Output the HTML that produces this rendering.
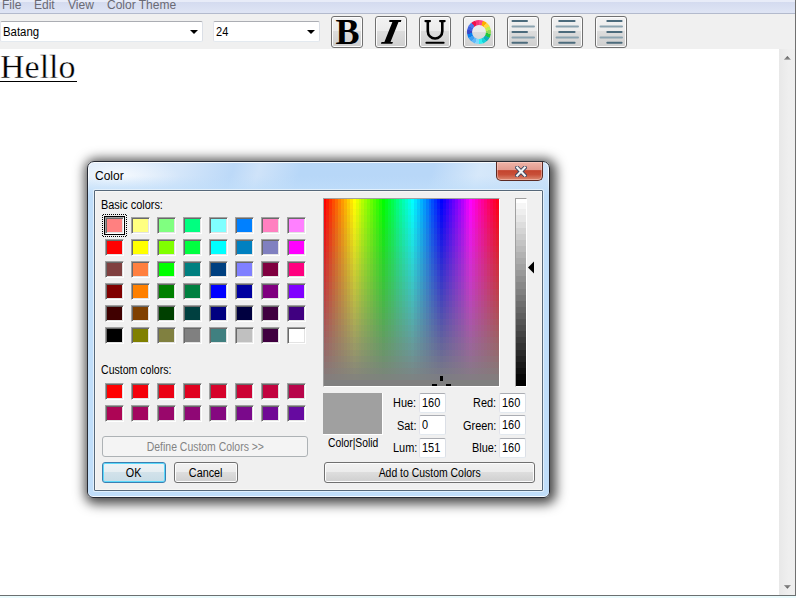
<!DOCTYPE html>
<html><head><meta charset="utf-8">
<style>
*{margin:0;padding:0;box-sizing:border-box}
html,body{width:796px;height:598px;overflow:hidden;background:#f0f0f0;font-family:"Liberation Sans",sans-serif;position:relative}
.a{position:absolute}
#menubar{left:0;top:0;width:796px;height:14px;background:linear-gradient(#e8ecf8 0,#e8ecf8 2px,#d4dbef 2px,#dee4f4 12px);border-bottom:1px solid #b3bacd}
.mi{position:absolute;top:-2px;font-size:12px;color:#6a6a74;line-height:14px}
.combo{position:absolute;top:21px;height:21px;background:#fff;border:1px solid #abadb3;border-left-color:#e2e3ea;border-right-color:#dbdfe6;border-bottom-color:#e3e9ef;border-radius:2px}
.combo span{position:absolute;left:2px;top:3px;font-size:12px;color:#000;line-height:14px}
.combo i{position:absolute;top:8px;width:0;height:0;border-left:4px solid transparent;border-right:4px solid transparent;border-top:4px solid #000}
.tb{position:absolute;top:16px;width:32px;height:32px;border:1px solid #707070;border-radius:3px;background:linear-gradient(#f2f2f2 0,#ebebeb 14px,#dddddd 14px,#cfcfcf 30px);box-shadow:inset 0 0 0 1px #fcfcfc}
#doc{left:0;top:49px;width:779px;height:546px;background:#fff}
#vs{left:779px;top:49px;width:16px;height:546px;background:linear-gradient(90deg,#e8e8e8,#efefef 60%,#eeeeee)}
#rline{left:795px;top:0;width:1px;height:596px;background:#707070}
#bline{left:0;top:595px;width:796px;height:1px;background:#6b7070}
#bbot{left:0;top:596px;width:796px;height:2px;background:#eafbfd}

.sw{position:absolute;width:19px;height:17px;border:1px solid;border-color:#a0a0a0 #fff #fff #a0a0a0;box-shadow:inset 1px 1px 0 #696969,inset -1px -1px 0 #e3e3e3}
.t11{position:absolute;font-size:12px;line-height:14px;color:#000;white-space:nowrap;transform:scaleX(.91);transform-origin:0 0}
.ed{position:absolute;width:27px;height:20px;background:#fff;border:1px solid;border-color:#abadb3 #dbdfe6 #e3e9ef #e2e3ea;border-radius:2px}
.ed span{position:absolute;left:2px;top:2px;font-size:12px;line-height:14px;transform:scaleX(.91);transform-origin:0 0}
.btn{position:absolute;height:21px;border:1px solid #707070;border-radius:3px;background:linear-gradient(#f2f2f2 0,#ebebeb 50%,#dddddd 50%,#cfcfcf 100%);box-shadow:inset 0 0 0 1px #fcfcfc;font-size:12px;line-height:13px;text-align:center;color:#000;white-space:nowrap}
.btn b{font-weight:normal;display:inline-block;transform:scaleX(.9)}
</style></head><body>
<div id="menubar" class="a">
  <span class="mi" style="left:2px">File</span>
  <span class="mi" style="left:34px">Edit</span>
  <span class="mi" style="left:68px">View</span>
  <span class="mi" style="left:107px">Color Theme</span>
</div>
<div class="combo" style="left:0;width:203px"><span style="transform:scaleX(.95);transform-origin:0 0">Batang</span><i style="left:189px"></i></div>
<div class="combo" style="left:213px;width:107px"><span style="left:2px;transform:scaleX(.92);transform-origin:0 0">24</span><i style="left:93px"></i></div>


<div class="tb" style="left:331px"><span style="position:absolute;left:3.5px;top:-3px;font-family:'Liberation Serif',serif;font-weight:bold;font-size:36px;line-height:36px;color:#000">B</span></div>
<div class="tb" style="left:375px"><svg class="a" style="left:-1px;top:-1px" width="32" height="32" viewBox="0 0 32 32"><path d="M14.4 4H26.4L25.8 5.9H23.5L15.5 26H17.9L17.3 27.8H5.9L6.5 26H9.4L17.4 5.9H14.2Z" fill="#000"/></svg></div>
<div class="tb" style="left:419px"><svg class="a" style="left:-1px;top:-1px" width="32" height="32" viewBox="0 0 32 32"><path d="M6.4 5.1H11M21.05 5.1H25.7" fill="none" stroke="#000" stroke-width="2.1" stroke-linecap="round"/><path d="M8.8 5.1V15.25A7.25 7.25 0 0 0 23.3 15.25V5.1" fill="none" stroke="#000" stroke-width="2.6"/><path d="M7.4 26.75H24.6" stroke="#000" stroke-width="2.1" stroke-linecap="round"/></svg></div>
<div class="tb" style="left:463px"><div class="a" style="left:3px;top:3px;width:24px;height:24px;border-radius:50%;background:conic-gradient(#ff4888 0deg 20deg,#ffaa00 20deg 40deg,#ffd840 40deg 60deg,#c0f050 60deg 80deg,#90d858 80deg 100deg,#20c840 100deg 120deg,#10b0b8 120deg 140deg,#18d0d8 140deg 160deg,#30f0f0 160deg 180deg,#80d8ff 180deg 200deg,#60b8f8 200deg 220deg,#40a0f0 220deg 240deg,#0880f0 240deg 260deg,#3848c8 260deg 280deg,#4060e0 280deg 300deg,#5078e8 300deg 320deg,#f0104a 320deg 340deg,#f83478 340deg 360deg)"></div><div class="a" style="left:8px;top:8px;width:14px;height:14px;border-radius:50%;background:linear-gradient(#ececec 0,#ebebeb 7px,#dddddd 7px,#d8d8d8)"></div></div>
<div class="tb" style="left:507px"><svg class="a" style="left:-1px;top:-1px" width="32" height="32" viewBox="0 0 32 32"><g stroke-linecap="round" stroke-width="2"><path d="M5.5 5.1H20M5.5 16H20M5.5 26.8H20" stroke="#4c6b7c"/><path d="M5.5 10.5H27M5.5 21.4H27" stroke="#8ba3b0"/></g></svg></div>
<div class="tb" style="left:551px"><svg class="a" style="left:-1px;top:-1px" width="32" height="32" viewBox="0 0 32 32"><g stroke-linecap="round" stroke-width="2"><path d="M8.2 5.1H23.6M8.2 16H23.6M8.2 26.8H23.6" stroke="#4c6b7c"/><path d="M5.5 10.5H27M5.5 21.4H27" stroke="#8ba3b0"/></g></svg></div>
<div class="tb" style="left:595px"><svg class="a" style="left:-1px;top:-1px" width="32" height="32" viewBox="0 0 32 32"><g stroke-linecap="round" stroke-width="2"><path d="M12.3 5.1H26.6M12.3 16H26.6M12.3 26.8H26.6" stroke="#4c6b7c"/><path d="M5.5 10.5H27M5.5 21.4H27" stroke="#8ba3b0"/></g></svg></div>

<div id="doc" class="a"></div>
<div id="vs" class="a"></div>
<svg class="a" style="left:779px;top:49px" width="16" height="546"><defs><linearGradient id="ag" x1="0" y1="0" x2="0" y2="1"><stop offset="0" stop-color="#505050"/><stop offset="1" stop-color="#9a9a9a"/></linearGradient><linearGradient id="ag2" x1="0" y1="0" x2="0" y2="1"><stop offset="0" stop-color="#9a9a9a"/><stop offset="1" stop-color="#505050"/></linearGradient></defs><path d="M4.8 10.8H12L8.4 7Z" fill="url(#ag)"/><path d="M4.8 536H12L8.4 539.8Z" fill="url(#ag2)"/></svg>
<div class="a" style="left:0;top:48px;font-family:'Liberation Serif',serif;font-size:34px;line-height:38px;color:#000;-webkit-text-stroke:0.35px #fff">Hello</div>
<div class="a" style="left:0;top:81px;width:77px;height:1px;background:#000"></div>

<!-- dialog -->
<div class="a" style="left:87px;top:161px;width:463px;height:337px;border-radius:7px 7px 6px 6px;box-shadow:2px 2px 12px 4px rgba(0,0,0,.72)"></div>
<div class="a" style="left:87px;top:161px;width:463px;height:337px;border-radius:7px 7px 6px 6px;border:1px solid #262a33;background:radial-gradient(ellipse 60px 22px at 32px 14px,rgba(255,255,255,.75),rgba(255,255,255,0)),linear-gradient(108deg,#dcebfb 0,#d4e6fa 90px,#bcd9f8 140px,#cfe3f9 165px,#b7d7f8 205px,#b8d7f8 330px,#d6e8fa 375px,#cde2f9 420px,#cfe3f9 463px);box-shadow:inset 0 0 0 1px rgba(255,255,255,.8)"></div>
<div class="a" style="left:88px;top:176px;width:461px;height:320px;border-radius:0 0 5px 5px;background:linear-gradient(rgba(192,222,250,0),#c0defa 20px)"></div>
<span class="a" style="left:95px;top:169px;font-size:12px;line-height:14px;color:#000">Color</span>
<div class="a" style="left:496px;top:162px;width:47px;height:19px;border:1px solid #5c2a23;border-top:none;border-radius:0 0 5px 5px;background:linear-gradient(#efb4a8 0,#e39c90 42%,#c4442e 48%,#c84f38 70%,#dc8a72 100%);box-shadow:inset 0 0 0 1px rgba(255,220,210,.45)"><svg class="a" style="left:18px;top:4px" width="12" height="11" viewBox="0 0 12 11"><path d="M2.2 1.6L9.8 9.4M9.8 1.6L2.2 9.4" stroke="#3b4660" stroke-width="4" stroke-linecap="square"/><path d="M2.2 1.6L9.8 9.4M9.8 1.6L2.2 9.4" stroke="#f4f4f4" stroke-width="2.2" stroke-linecap="square"/></svg></div>
<div class="a" style="left:94px;top:190px;width:449px;height:301px;border:1px solid #56687a;border-radius:1px;background:#f0f0f0;box-shadow:0 0 0 1px #e2f0fc,inset 1px 1px 0 #f8f8f6,inset -1px -1px 0 #f6f6f4"></div>
<span class="t11" style="left:101px;top:198px">Basic colors:</span>
<span class="t11" style="left:101px;top:363px;transform:scaleX(.88)">Custom colors:</span>
<div class="sw" style="left:105px;top:217px;background:#FF8080"></div>
<div class="sw" style="left:131px;top:217px;background:#FFFF80"></div>
<div class="sw" style="left:157px;top:217px;background:#80FF80"></div>
<div class="sw" style="left:183px;top:217px;background:#00FF80"></div>
<div class="sw" style="left:209px;top:217px;background:#80FFFF"></div>
<div class="sw" style="left:235px;top:217px;background:#0080FF"></div>
<div class="sw" style="left:261px;top:217px;background:#FF80C0"></div>
<div class="sw" style="left:287px;top:217px;background:#FF80FF"></div>
<div class="sw" style="left:105px;top:239px;background:#FF0000"></div>
<div class="sw" style="left:131px;top:239px;background:#FFFF00"></div>
<div class="sw" style="left:157px;top:239px;background:#80FF00"></div>
<div class="sw" style="left:183px;top:239px;background:#00FF40"></div>
<div class="sw" style="left:209px;top:239px;background:#00FFFF"></div>
<div class="sw" style="left:235px;top:239px;background:#0080C0"></div>
<div class="sw" style="left:261px;top:239px;background:#8080C0"></div>
<div class="sw" style="left:287px;top:239px;background:#FF00FF"></div>
<div class="sw" style="left:105px;top:261px;background:#804040"></div>
<div class="sw" style="left:131px;top:261px;background:#FF8040"></div>
<div class="sw" style="left:157px;top:261px;background:#00FF00"></div>
<div class="sw" style="left:183px;top:261px;background:#008080"></div>
<div class="sw" style="left:209px;top:261px;background:#004080"></div>
<div class="sw" style="left:235px;top:261px;background:#8080FF"></div>
<div class="sw" style="left:261px;top:261px;background:#800040"></div>
<div class="sw" style="left:287px;top:261px;background:#FF0080"></div>
<div class="sw" style="left:105px;top:283px;background:#800000"></div>
<div class="sw" style="left:131px;top:283px;background:#FF8000"></div>
<div class="sw" style="left:157px;top:283px;background:#008000"></div>
<div class="sw" style="left:183px;top:283px;background:#008040"></div>
<div class="sw" style="left:209px;top:283px;background:#0000FF"></div>
<div class="sw" style="left:235px;top:283px;background:#0000A0"></div>
<div class="sw" style="left:261px;top:283px;background:#800080"></div>
<div class="sw" style="left:287px;top:283px;background:#8000FF"></div>
<div class="sw" style="left:105px;top:305px;background:#400000"></div>
<div class="sw" style="left:131px;top:305px;background:#804000"></div>
<div class="sw" style="left:157px;top:305px;background:#004000"></div>
<div class="sw" style="left:183px;top:305px;background:#004040"></div>
<div class="sw" style="left:209px;top:305px;background:#000080"></div>
<div class="sw" style="left:235px;top:305px;background:#000040"></div>
<div class="sw" style="left:261px;top:305px;background:#400040"></div>
<div class="sw" style="left:287px;top:305px;background:#400080"></div>
<div class="sw" style="left:105px;top:327px;background:#000000"></div>
<div class="sw" style="left:131px;top:327px;background:#808000"></div>
<div class="sw" style="left:157px;top:327px;background:#808040"></div>
<div class="sw" style="left:183px;top:327px;background:#808080"></div>
<div class="sw" style="left:209px;top:327px;background:#408080"></div>
<div class="sw" style="left:235px;top:327px;background:#C0C0C0"></div>
<div class="sw" style="left:261px;top:327px;background:#400040"></div>
<div class="sw" style="left:287px;top:327px;background:#FFFFFF"></div>
<div class="sw" style="left:105px;top:383px;background:#ff0000"></div>
<div class="sw" style="left:131px;top:383px;background:#f5010b"></div>
<div class="sw" style="left:157px;top:383px;background:#eb0115"></div>
<div class="sw" style="left:183px;top:383px;background:#e00220"></div>
<div class="sw" style="left:209px;top:383px;background:#d6032b"></div>
<div class="sw" style="left:235px;top:383px;background:#cc0335"></div>
<div class="sw" style="left:261px;top:383px;background:#c20440"></div>
<div class="sw" style="left:287px;top:383px;background:#b8054b"></div>
<div class="sw" style="left:105px;top:405px;background:#ad0555"></div>
<div class="sw" style="left:131px;top:405px;background:#a30660"></div>
<div class="sw" style="left:157px;top:405px;background:#99076b"></div>
<div class="sw" style="left:183px;top:405px;background:#8f0775"></div>
<div class="sw" style="left:209px;top:405px;background:#850880"></div>
<div class="sw" style="left:235px;top:405px;background:#7a098b"></div>
<div class="sw" style="left:261px;top:405px;background:#700995"></div>
<div class="sw" style="left:287px;top:405px;background:#660aa0"></div>

<div class="a" style="left:104px;top:216px;width:21px;height:19px;border:1px solid #000"></div>
<svg class="a" style="left:102px;top:214px" width="25" height="23"><defs><pattern id="dp" width="2" height="2" patternUnits="userSpaceOnUse"><rect x="1" y="0" width="1" height="1" fill="#000"/><rect x="0" y="1" width="1" height="1" fill="#000"/></pattern></defs><path d="M0 0h25v1H0zM0 22h25v1H0zM0 0h1v23H0zM24 0h1v23h-1z" fill="url(#dp)"/></svg>
<!-- spectrum -->
<div class="a" style="left:323px;top:198px;width:177px;height:189px;border:1px solid;border-color:#a0a0a0 #fff #fff #a0a0a0;background:linear-gradient(rgba(128,128,128,0.000) 0.0px 4.2px,rgba(128,128,128,0.033) 4.2px 10.3px,rgba(128,128,128,0.067) 10.3px 16.4px,rgba(128,128,128,0.100) 16.4px 22.5px,rgba(128,128,128,0.133) 22.5px 28.6px,rgba(128,128,128,0.167) 28.6px 34.7px,rgba(128,128,128,0.200) 34.7px 40.8px,rgba(128,128,128,0.233) 40.8px 46.9px,rgba(128,128,128,0.267) 46.9px 53.0px,rgba(128,128,128,0.300) 53.0px 59.1px,rgba(128,128,128,0.333) 59.1px 65.2px,rgba(128,128,128,0.367) 65.2px 71.3px,rgba(128,128,128,0.400) 71.3px 77.4px,rgba(128,128,128,0.433) 77.4px 83.5px,rgba(128,128,128,0.467) 83.5px 89.6px,rgba(128,128,128,0.500) 89.6px 95.7px,rgba(128,128,128,0.533) 95.7px 101.8px,rgba(128,128,128,0.567) 101.8px 107.9px,rgba(128,128,128,0.600) 107.9px 114.0px,rgba(128,128,128,0.633) 114.0px 120.1px,rgba(128,128,128,0.667) 120.1px 126.2px,rgba(128,128,128,0.700) 126.2px 132.3px,rgba(128,128,128,0.733) 132.3px 138.4px,rgba(128,128,128,0.767) 138.4px 144.5px,rgba(128,128,128,0.800) 144.5px 150.6px,rgba(128,128,128,0.833) 150.6px 156.7px,rgba(128,128,128,0.867) 156.7px 162.8px,rgba(128,128,128,0.900) 162.8px 168.9px,rgba(128,128,128,0.933) 168.9px 175.0px,rgba(128,128,128,0.967) 175.0px 181.1px,rgba(128,128,128,1.000) 181.1px 187.0px),linear-gradient(90deg,#ff0000 0px 2px,#ff1a00 2px 5px,#ff3300 5px 8px,#ff4d00 8px 11px,#ff6600 11px 14px,#ff8000 14px 17px,#ff9900 17px 20px,#ffb200 20px 23px,#ffcc00 23px 26px,#ffe500 26px 29px,#ffff00 29px 32px,#e6ff00 32px 35px,#ccff00 35px 37px,#b2ff00 37px 40px,#99ff00 40px 43px,#80ff00 43px 46px,#66ff00 46px 49px,#4cff00 49px 52px,#33ff00 52px 55px,#1aff00 55px 58px,#00ff00 58px 61px,#00ff19 61px 64px,#00ff33 64px 67px,#00ff4d 67px 70px,#00ff66 70px 72px,#00ff80 72px 75px,#00ff99 75px 78px,#00ffb3 78px 81px,#00ffcc 81px 84px,#00ffe6 84px 87px,#00ffff 87px 90px,#00e5ff 90px 93px,#00ccff 93px 96px,#00b2ff 96px 99px,#0099ff 99px 102px,#007fff 102px 105px,#0066ff 105px 107px,#004cff 107px 110px,#0033ff 110px 113px,#0019ff 113px 116px,#0000ff 116px 119px,#1900ff 119px 122px,#3300ff 122px 125px,#4d00ff 125px 128px,#6600ff 128px 131px,#7f00ff 131px 134px,#9900ff 134px 137px,#b300ff 137px 140px,#cc00ff 140px 142px,#e500ff 142px 145px,#ff00ff 145px 148px,#ff00e6 148px 151px,#ff00cc 151px 154px,#ff00b2 154px 157px,#ff0099 157px 160px,#ff0080 160px 163px,#ff0066 163px 166px,#ff004c 166px 169px,#ff0033 169px 172px,#ff001a 172px 175px)"></div>
<div class="a" style="left:515px;top:198px;width:12px;height:189px;border:1px solid;border-color:#a0a0a0 #fff #fff #a0a0a0;background:linear-gradient(rgb(255,255,255) 0.0px 4.2px,rgb(246,246,246) 4.2px 10.3px,rgb(238,238,238) 10.3px 16.4px,rgb(230,230,230) 16.4px 22.5px,rgb(221,221,221) 22.5px 28.6px,rgb(212,212,212) 28.6px 34.7px,rgb(204,204,204) 34.7px 40.8px,rgb(195,195,195) 40.8px 46.9px,rgb(187,187,187) 46.9px 53.0px,rgb(178,178,178) 53.0px 59.1px,rgb(170,170,170) 59.1px 65.2px,rgb(162,162,162) 65.2px 71.3px,rgb(153,153,153) 71.3px 77.4px,rgb(144,144,144) 77.4px 83.5px,rgb(136,136,136) 83.5px 89.6px,rgb(128,128,128) 89.6px 95.7px,rgb(119,119,119) 95.7px 101.8px,rgb(110,110,110) 101.8px 107.9px,rgb(102,102,102) 107.9px 114.0px,rgb(94,94,94) 114.0px 120.1px,rgb(85,85,85) 120.1px 126.2px,rgb(77,77,77) 126.2px 132.3px,rgb(68,68,68) 132.3px 138.4px,rgb(59,59,59) 138.4px 144.5px,rgb(51,51,51) 144.5px 150.6px,rgb(42,42,42) 150.6px 156.7px,rgb(34,34,34) 156.7px 162.8px,rgb(25,25,25) 162.8px 168.9px,rgb(17,17,17) 168.9px 175.0px,rgb(8,8,8) 175.0px 181.1px,rgb(0,0,0) 181.1px 187.0px)"></div>
<svg class="a" style="left:527px;top:260px" width="8" height="15" viewBox="0 0 8 15"><path d="M1 7.5L7 1.5V13.5Z" fill="#000"/></svg>
<svg class="a" style="left:432px;top:376px" width="19" height="10"><path d="M8 0h3v5H8zM0 8h5v2H0zM14 8h5v2h-5z" fill="#000"/></svg>
<!-- preview -->
<div class="a" style="left:323px;top:393px;width:60px;height:42px;background:#a0a0a0;border-right:1px solid #fff;border-bottom:1px solid #fff"></div>
<span class="t11" style="left:328px;top:436px;transform:scaleX(.86)">Color|Solid</span>
<span class="t11" style="left:393px;top:396px">Hue:</span>
<span class="t11" style="left:397px;top:419px">Sat:</span>
<span class="t11" style="left:393px;top:441px">Lum:</span>
<span class="t11" style="left:473px;top:396px">Red:</span>
<span class="t11" style="left:463px;top:419px">Green:</span>
<span class="t11" style="left:472px;top:441px">Blue:</span>
<div class="ed" style="left:419px;top:393px"><span>160</span></div>
<div class="ed" style="left:419px;top:415px"><span>0</span></div>
<div class="ed" style="left:419px;top:438px"><span>151</span></div>
<div class="ed" style="left:499px;top:393px"><span>160</span></div>
<div class="ed" style="left:499px;top:415px"><span>160</span></div>
<div class="ed" style="left:499px;top:438px"><span>160</span></div>
<!-- buttons -->
<div class="btn" style="left:102px;top:436px;width:206px;height:21px;border-color:#adb2b5;background:#f4f4f4;box-shadow:none;color:#838383;line-height:20px"><b style="transform:scaleX(.87)">Define Custom Colors &gt;&gt;</b></div>
<div class="btn" style="left:102px;top:462px;width:64px;border-color:#3c7fb1;background:linear-gradient(#eef3f6 0,#e6eef2 45%,#d2e2ea 50%,#c8dce6 100%);box-shadow:inset 0 0 0 1px #5bd9fb;line-height:19px;padding-top:1px"><b>OK</b></div>
<div class="btn" style="left:174px;top:462px;width:64px;line-height:19px;padding-top:1px"><b>Cancel</b></div>
<div class="btn" style="left:324px;top:462px;width:211px;line-height:19px;padding-top:1px"><b style="transform:scaleX(.87)">Add to Custom Colors</b></div>
<div id="rline" class="a"></div>
<div id="bline" class="a"></div>
<div id="bbot" class="a"></div>
</body></html>
